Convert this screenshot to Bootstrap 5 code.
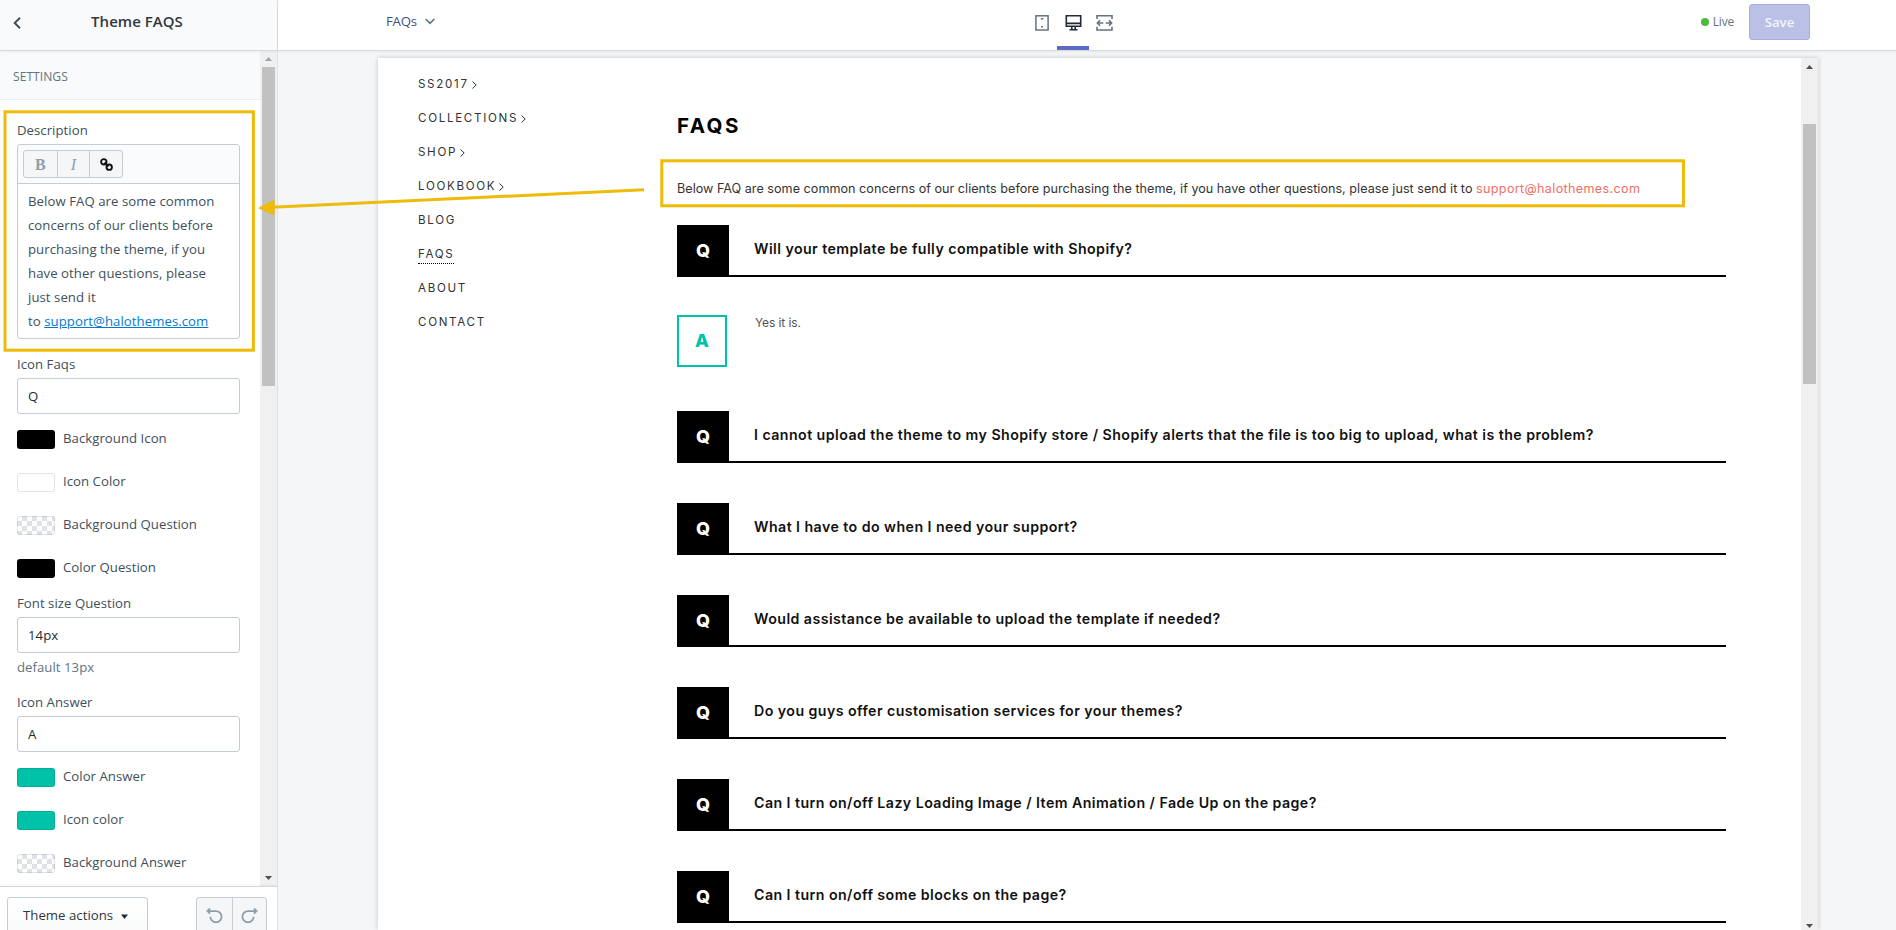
<!DOCTYPE html>
<html lang="en">
<head>
<meta charset="utf-8">
<meta name="viewport" content="width=device-width, initial-scale=1">
<title>Theme FAQS</title>
<link href="https://cdn.jsdelivr.net/npm/bootstrap@5.3.0/dist/css/bootstrap.min.css" rel="stylesheet">
<style>
  body { font-family: "Open Sans", "Noto Sans", sans-serif; font-size: 13.2px; letter-spacing: .03px; line-height: 20px; color: #414f5b; background: #f4f6f8; }
  .editor { height: 100vh; }
  .side { width: 278px; border-right: 1px solid #dfe3e8; background: #fff; }
  .head { height: 51px; border-bottom: 1px solid #d6dade; box-shadow: 0 1px 2px rgba(0,0,0,.06); z-index: 2; }
  .side-head { background: #f9fafb; padding: 0 13px; }
  .side-title { font-size: 15px; font-weight: 600; color: #31373d; padding: 0 6px 9px 0; margin-left: -5px; }
  .section-title { height: 49px; border-bottom: 1px solid #ebeef0; background: #f9fafb; color: #637381; font-size: 12.1px; font-weight: 500; padding: 3px 13px 0; }
  .fields { padding: 20px 20px 0 17px; }
  .label-row { height: 20px; margin-bottom: 4px; }
  .field { margin-bottom: 15px; }
  .box { border: 1px solid #c4cdd5; border-radius: 3px; background: #fff; }
  .input-box { height: 36px; padding: 7px 10px; font: inherit; color: #212b36; }
  .tools { height: 39px; padding: 5px; background: #fafbfc; border-bottom: 1px solid #c4cdd5; border-radius: 3px 3px 0 0; }
  .tool { width: 33px; height: 26px; font: 700 16px/27px "Liberation Serif", serif; color: #919eab; }
  .tool + .tool { border-left: 1px solid #c4cdd5; }
  .tool-set { background: #f4f6f8; width: 100px; height: 28px; }
  .rich { height: 154px; padding: 5px 10px; line-height: 24px; letter-spacing: .05px; color: #414f5b; }
  .rich a { color: #007ace; }
  .swatches { gap: 24px; margin: 16px 0 15px; }
  .swatch-row { height: 19px; gap: 8px; line-height: 17px; }
  .swatch-label { padding-bottom: 2px; }
  .swatch { width: 38px; height: 19px; border-radius: 3px; border: 1px solid rgba(0,0,0,.1); background: #fff; }
  .ink { background: #000; }
  .teal { background: #00c2a8; }
  .clear { background: repeating-conic-gradient(#dfe3e8 0 25%, #fff 0 50%) 4px 4px / 10px 10px; }
  .track { width: 17px; background: #f0f0f0; padding: 16px 2px 0; position: relative; }
  .thumb { background: #c1c1c1; width: 13px; }
  .tri { position: absolute; left: 5px; }
  .side-foot { height: 44px; border-top: 1px solid #d3d8dd; box-shadow: 0 -1px 2px rgba(0,0,0,.05); padding: 10px 10px 0 7px; z-index: 1; }
  .actions { width: 141px; height: 36px; background: linear-gradient(#fff,#f9fafb); color: #31373d; padding: 7px 15px; white-space: nowrap; }
  .history { width: 71px; height: 36px; background: #f4f6f8; }
  .history > span { width: 35px; padding-top: 10px; }
  .history > span + span { border-left: 1px solid #c4cdd5; }
  .topbar { background: #fff; }
  .page-pick { width: 200px; padding: 0 0 8px 108px; color: #414f7b; letter-spacing: -.2px; }
  .device { width: 31px; height: 50px; padding-top: 14px; }
  .device.on { width: 32px; border-bottom: 4px solid #5c6ac4; }
  .right-tools { padding: 4px 86px 0 0; }
  .live { color: #637381; font-size: 12px; gap: 4px; margin: 0 15px 0 0; letter-spacing: -.2px; }
  .dot { width: 8px; height: 8px; border-radius: 50%; background: #50b83c; }
  .save { width: 61px; height: 36px; border-radius: 3px; background: #bac0e6; border: 1px solid #a7afe0; color: #f4f5fc; padding: 7px 0; font-weight: 600; }
  .frame-wrap { padding: 7px 78px 0 100px; }
  .preview { background: #fff; box-shadow: 0 0 5px rgba(0,0,0,.2); font-family: Inter, "Open Sans", sans-serif; color: #222; }
  .shop-nav { width: 299px; padding: 9px 0 0 40px; font-size: 11.6px; letter-spacing: 1.68px; color: #333; }
  .shop-nav li { height: 34px; line-height: 34px; }
  .shop-nav svg { margin-left: -2px; }
  .here { border-bottom: 1px dotted #000; padding-bottom: 2px; }
  .shop-main { width: 1049px; padding-top: 52px; }
  .faq-title { font-size: 20.5px; font-weight: 700; letter-spacing: 2.5px; color: #000; line-height: 32px; margin-bottom: 36px; }
  .intro { font-size: 12.6px; letter-spacing: .025px; color: #333; line-height: 22px; margin-bottom: 25px; white-space: nowrap; }
  .intro a { color: #ef6f67; text-decoration: none; letter-spacing: .34px; }
  .question { height: 52px; border-bottom: 2px solid #000; margin-bottom: 40px; font-size: 14.2px; font-weight: 600; letter-spacing: .44px; color: #111; }
  .q-mark { width: 52px; height: 52px; background: #000; color: #fff; font-size: 18px; font-weight: 800; letter-spacing: 0; margin-right: 25px; flex: none; }
  .q-text { padding-top: 14px; white-space: nowrap; }
  .first { margin-bottom: 38px; }
  .answer { height: 52px; margin-bottom: 44px; font-size: 12px; letter-spacing: -.1px; color: #555; }
  .a-mark { width: 50px; border: 2px solid #00c2a8; color: #00c2a8; font-size: 18px; font-weight: 800; margin-right: 28px; }
  .notes { z-index: 10; pointer-events: none; }
</style>
</head>
<body class="overflow-hidden">
<div class="editor d-flex position-relative overflow-hidden">
  <aside class="side d-flex flex-column flex-shrink-0">
    <header class="head side-head d-flex align-items-center flex-shrink-0 position-relative">
      <svg class="mb-1" width="8" height="12" viewBox="0 0 8 12" fill="none" stroke="#454f5b" stroke-width="2"><path d="M7 .8 1.7 6 7 11.2"/></svg>
      <div class="side-title flex-grow-1 text-center">Theme FAQS</div>
    </header>
    <div class="d-flex flex-grow-1 overflow-hidden">
      <div class="flex-grow-1">
        <div class="section-title d-flex align-items-center">SETTINGS</div>
        <div class="fields">
          <div class="field">
            <div class="label-row">Description</div>
            <div class="box">
              <div class="tools">
                <div class="tool-set box d-flex text-center">
                  <span class="tool">B</span><span class="tool fst-italic fw-normal">I</span>
                  <span class="tool"><svg class="d-block mx-auto" style="margin-top:7px" width="13" height="13" viewBox="0 0 13 13" fill="none" stroke="#111" stroke-width="1.9"><circle cx="3.8" cy="3.8" r="2.7"/><circle cx="9.2" cy="9.2" r="2.7"/><path d="m4.5 4.5 4 4"/></svg></span>
                </div>
              </div>
              <div class="rich">Below FAQ are some common<br>concerns of our clients before<br>purchasing the theme, if you<br>have other questions, please<br>just send it<br>to <a href="#">support@halothemes.com</a></div>
            </div>
          </div>
          <div class="label-row">Icon Faqs</div>
          <div class="box input-box">Q</div>
          <div class="swatches d-flex flex-column">
            <div class="swatch-row d-flex align-items-center"><span class="swatch ink"></span><span class="swatch-label">Background Icon</span></div>
            <div class="swatch-row d-flex align-items-center"><span class="swatch"></span><span class="swatch-label">Icon Color</span></div>
            <div class="swatch-row d-flex align-items-center"><span class="swatch clear"></span><span class="swatch-label">Background Question</span></div>
            <div class="swatch-row d-flex align-items-center"><span class="swatch ink"></span><span class="swatch-label">Color Question</span></div>
          </div>
          <div class="field">
            <div class="label-row">Font size Question</div>
            <div class="box input-box mb-1">14px</div>
            <div style="color:#637381">default 13px</div>
          </div>
          <div class="label-row">Icon Answer</div>
          <div class="box input-box">A</div>
          <div class="swatches d-flex flex-column">
            <div class="swatch-row d-flex align-items-center"><span class="swatch teal"></span><span class="swatch-label">Color Answer</span></div>
            <div class="swatch-row d-flex align-items-center"><span class="swatch teal"></span><span class="swatch-label">Icon color</span></div>
            <div class="swatch-row d-flex align-items-center"><span class="swatch clear"></span><span class="swatch-label">Background Answer</span></div>
          </div>
        </div>
      </div>
      <div class="track flex-shrink-0">
        <svg class="tri" style="top:6px" width="7" height="4"><path d="M0 4 3.5 0 7 4z" fill="#a3a3a3"/></svg>
        <div class="thumb" style="height:319px"></div>
        <svg class="tri" style="bottom:6px" width="7" height="4"><path d="M0 0 3.5 4 7 0z" fill="#505050"/></svg>
      </div>
    </div>
    <footer class="side-foot bg-white d-flex justify-content-between flex-shrink-0 position-relative overflow-hidden">
      <div class="box actions">Theme actions <svg class="ms-1" width="7" height="5"><path d="M0 .5h7L3.5 5z" fill="#212b36"/></svg></div>
      <div class="box history d-flex text-center">
        <span><svg class="d-block mx-auto" width="17" height="16" viewBox="0 0 17 16" fill="none" stroke="#919eab" stroke-width="1.8"><path d="M4 .5 1.4 3.1 4 5.7M1.6 3.1H10A5.6 5.6 0 1 1 4.4 8.7"/></svg></span>
        <span><svg class="d-block mx-auto" width="17" height="16" viewBox="0 0 17 16" fill="none" stroke="#919eab" stroke-width="1.8"><path d="m13 .5 2.6 2.6L13 5.7M15.4 3.1H7a5.6 5.6 0 1 0 5.6 5.6"/></svg></span>
      </div>
    </footer>
  </aside>
  <div class="flex-grow-1 d-flex flex-column">
    <header class="head topbar d-flex justify-content-between position-relative flex-shrink-0">
      <div class="page-pick d-flex align-items-center flex-shrink-0">FAQs <svg class="ms-2" width="10" height="7" viewBox="0 0 10 7" fill="none" stroke="#637381" stroke-width="1.7"><path d="m.7 1 4.3 4.3L9.3 1"/></svg></div>
      <div class="position-absolute start-50 translate-middle-x d-flex text-center" style="margin-left:-14px">
        <span class="device"><svg class="d-block mx-auto" width="14" height="17" viewBox="0 0 14 17" fill="none" stroke="#637381" stroke-width="1.5"><rect x=".9" y="1.8" width="12.2" height="14.2"/><path d="M5.8 4.8h2.6M6.1 12.7h2"/></svg></span>
        <span class="device on"><svg class="d-block mx-auto" width="17" height="17" viewBox="0 0 17 17" fill="none" stroke="#212b36" stroke-width="1.6"><path d="M1.3 1.8h14.4v10.4H1.3zM1 9.4h15M6.8 12.5v2.7M10.2 12.5v2.7M4.5 15.8h8"/></svg></span>
        <span class="device"><svg class="d-block mx-auto" width="17" height="17" viewBox="0 0 17 17" fill="none" stroke="#637381" stroke-width="1.6"><path d="M1 5V1.8h15V5M1 12.8V16h15v-3.2M7.3 9H1.5M4 6.3 1.4 9 4 11.7M9.7 9h5.8M13 6.3 15.6 9 13 11.7"/></svg></span>
      </div>
      <div class="right-tools d-flex align-items-start">
        <div class="live d-flex align-items-center align-self-start mt-2"><span class="dot"></span>Live</div>
        <div class="save text-center">Save</div>
      </div>
    </header>
    <div class="frame-wrap flex-grow-1 d-flex overflow-hidden">
      <div class="preview flex-grow-1 d-flex">
        <nav class="shop-nav flex-shrink-0">
          <ul class="list-unstyled mb-0">
            <li>SS2017 <svg width="5" height="8" viewBox="0 0 5 8" fill="none" stroke="#333"><path d="M.5.5 4.2 4 .5 7.5"/></svg></li>
            <li>COLLECTIONS <svg width="5" height="8" viewBox="0 0 5 8" fill="none" stroke="#333"><path d="M.5.5 4.2 4 .5 7.5"/></svg></li>
            <li>SHOP <svg width="5" height="8" viewBox="0 0 5 8" fill="none" stroke="#333"><path d="M.5.5 4.2 4 .5 7.5"/></svg></li>
            <li>LOOKBOOK <svg width="5" height="8" viewBox="0 0 5 8" fill="none" stroke="#333"><path d="M.5.5 4.2 4 .5 7.5"/></svg></li>
            <li>BLOG</li>
            <li><span class="here">FAQS</span></li>
            <li>ABOUT</li>
            <li>CONTACT</li>
          </ul>
        </nav>
        <main class="shop-main flex-shrink-0">
          <h1 class="faq-title">FAQS</h1>
          <p class="intro">Below FAQ are some common concerns of our clients before purchasing the theme, if you have other questions, please just send it to <a href="#">support@halothemes.com</a></p>
          <div class="question first d-flex"><span class="q-mark d-flex align-items-center justify-content-center">Q</span><span class="q-text">Will your template be fully compatible with Shopify?</span></div>
          <div class="answer d-flex"><span class="a-mark d-flex align-items-center justify-content-center">A</span><span style="margin-top:-2px">Yes it is.</span></div>
          <div class="question d-flex"><span class="q-mark d-flex align-items-center justify-content-center">Q</span><span class="q-text">I cannot upload the theme to my Shopify store / Shopify alerts that the file is too big to upload, what is the problem?</span></div>
          <div class="question d-flex"><span class="q-mark d-flex align-items-center justify-content-center">Q</span><span class="q-text">What I have to do when I need your support?</span></div>
          <div class="question d-flex"><span class="q-mark d-flex align-items-center justify-content-center">Q</span><span class="q-text">Would assistance be available to upload the template if needed?</span></div>
          <div class="question d-flex"><span class="q-mark d-flex align-items-center justify-content-center">Q</span><span class="q-text">Do you guys offer customisation services for your themes?</span></div>
          <div class="question d-flex"><span class="q-mark d-flex align-items-center justify-content-center">Q</span><span class="q-text">Can I turn on/off Lazy Loading Image / Item Animation / Fade Up on the page?</span></div>
          <div class="question d-flex"><span class="q-mark d-flex align-items-center justify-content-center">Q</span><span class="q-text">Can I turn on/off some blocks on the page?</span></div>
        </main>
        <div class="track ms-auto flex-shrink-0" style="padding-top:66px">
          <svg class="tri" style="top:7px" width="7" height="4"><path d="M0 4 3.5 0 7 4z" fill="#505050"/></svg>
          <div class="thumb" style="height:260px"></div>
          <svg class="tri" style="bottom:2px" width="7" height="4"><path d="M0 0 3.5 4 7 0z" fill="#505050"/></svg>
        </div>
      </div>
    </div>
  </div>
  <!-- callout boxes and the arrow linking the setting to the page text -->
  <svg class="notes position-absolute top-0 start-0" width="1896" height="930" fill="none" stroke="#edbb08" stroke-width="3">
    <rect x="5" y="111.8" width="248.4" height="238.4"/>
    <rect x="661.8" y="160.8" width="1021.7" height="45"/>
    <path d="M644 189.8 272 207.3"/>
    <path d="M258 208 274.5 199.5V215.5z" fill="#edbb08" stroke="none"/>
  </svg>
</div>
<script src="https://cdn.jsdelivr.net/npm/bootstrap@5.3.0/dist/js/bootstrap.bundle.min.js"></script>
</body>
</html>
